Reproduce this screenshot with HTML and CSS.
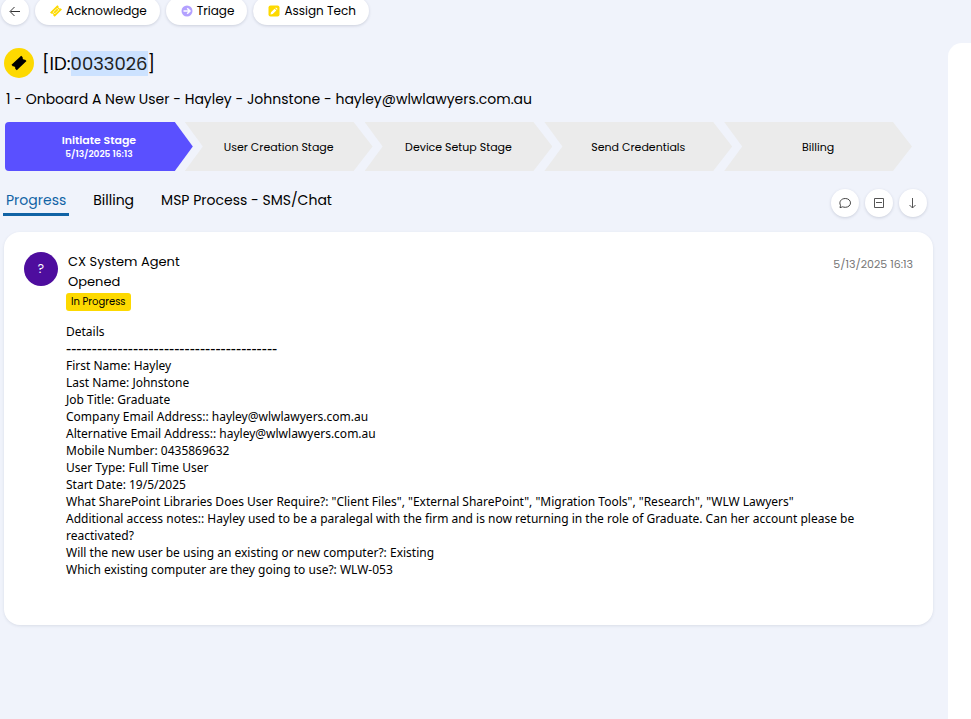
FILE: index.html
```html
<!DOCTYPE html>
<html lang="en">
<head>
    <meta charset="UTF-8">
    <meta name="viewport" content="width=device-width, initial-scale=1.0">
    <title>Ticket 0033026</title>
    <link rel="stylesheet" href="styles.css">
</head>
<body>
    <div class="toolbar">
        <button class="round-button" aria-label="Back">
            <svg width="12" height="12" viewBox="0 0 12 12" fill="none" stroke="#333"><path d="M11 6.500H1.5M5.5 2L1 6.500l4.5 4.5"/></svg>
        </button>
        <button class="action-button">
            <svg width="12" height="12" viewBox="0 0 12 12"><path fill="#fdd900" d="M0 7.5L7.3 0.2l1.3 1.1a1.4 1.4 0 0 0 1.9 1.9L12 4.5 4.7 11.8 3.3 10.6a1.4 1.4 0 0 0-1.9-1.9z"/><path fill="none" stroke="#fff" stroke-width=".7" d="M3 7.3l4-4 1.9 1.5-4 4z"/></svg>
            Acknowledge
        </button>
        <button class="action-button">
            <svg width="12" height="12" viewBox="0 0 12 12"><circle cx="6" cy="6" r="5.5" fill="#b3a1ff"/><path fill="none" stroke="#fff" stroke-width="1.5" d="M2.5 6h6.5M6.2 3.2L9 6 6.2 8.8"/></svg>
            Triage
        </button>
        <button class="action-button">
            <svg width="12" height="12" viewBox="0 0 12 12"><rect x=".5" y=".5" width="11" height="11" rx="2" fill="#fdd900"/><path fill="#fff" d="M2.5 9.5l.5-2.2 3.6-3.6 1.7 1.7L4.7 9zM7.2 3.1l.8-.7 1.7 1.7-.8.7z"/></svg>
            Assign Tech
        </button>
    </div>

    <div class="page">
        <main class="ticket">
            <div class="ticket-title">
                <span class="ticket-icon">
                    <svg width="16" height="16" viewBox="0 0 16 16"><path d="M0.5 9.8L10.2 0.7l1.5 1.6a1.7 1.7 0 0 0 2.2 2.2l1.6 1.6-9.7 9.2-1.6-1.6a1.7 1.7 0 0 0-2.2-2.2z"/></svg>
                </span>
                <h1>[ID:<mark>0033026</mark>]</h1>
            </div>
            <p class="subject">1 - Onboard A New User - Hayley - Johnstone - hayley@wlwlawyers.com.au</p>

            <div class="stages">
                <div class="stage active">
                    <span>Initiate Stage</span>
                    <small>5/13/2025 16:13</small>
                </div>
                <div class="stage">User Creation Stage</div>
                <div class="stage">Device Setup Stage</div>
                <div class="stage">Send Credentials</div>
                <div class="stage">Billing</div>
            </div>

            <div class="tab-row">
                <nav class="tabs">
                    <a href="#" class="tab selected">Progress</a>
                    <a href="#" class="tab">Billing</a>
                    <a href="#" class="tab">MSP Process - SMS/Chat</a>
                </nav>
                <div class="tab-actions">
                    <button class="round-button" aria-label="Conversation">
                        <svg width="12" height="12" viewBox="0 0 12 12" fill="none" stroke="#444"><path d="M1.5 8.3C-.3 5 2 1.5 6.3 1.5c3 0 5.2 1.9 5.2 4.4s-2.2 4.4-5.2 4.4c-1 0-1.9-.2-2.7-.5L1 10.7z"/></svg>
                    </button>
                    <button class="round-button" aria-label="Collapse">
                        <svg width="12" height="12" viewBox="0 0 12 12" fill="none" stroke="#555"><path d="M1.5 1.5h9v9h-9zM3 5.5h6"/></svg>
                    </button>
                    <button class="round-button" aria-label="Scroll down">
                        <svg width="12" height="12" viewBox="0 0 12 12" fill="none" stroke="#555"><path d="M5.5 1v10M2.5 8l3 3 3-3"/></svg>
                    </button>
                </div>
            </div>

            <article class="card">
                <div class="avatar">?</div>
                <div class="entry">
                    <div class="entry-head">
                        <div class="author">
                            <p>CX System Agent</p>
                            <p>Opened</p>
                        </div>
                        <time>5/13/2025 16:13</time>
                    </div>
                    <span class="badge">In Progress</span>
                    <div class="details">
                        <p>Details</p>
                        <p class="dashes">-----------------------------------------</p>
                        <p>First Name: Hayley</p>
                        <p>Last Name: Johnstone</p>
                        <p>Job Title: Graduate</p>
                        <p>Company Email Address:: hayley@wlwlawyers.com.au</p>
                        <p>Alternative Email Address:: hayley@wlwlawyers.com.au</p>
                        <p>Mobile Number: 0435869632</p>
                        <p>User Type: Full Time User</p>
                        <p>Start Date: 19/5/2025</p>
                        <p>What SharePoint Libraries Does User Require?: "Client Files", "External SharePoint", "Migration Tools", "Research", "WLW Lawyers"</p>
                        <p>Additional access notes:: Hayley used to be a paralegal with the firm and is now returning in the role of Graduate. Can her account please be reactivated?</p>
                        <p>Will the new user be using an existing or new computer?: Existing</p>
                        <p>Which existing computer are they going to use?: WLW-053</p>
                    </div>
                </div>
            </article>
        </main>
        <aside class="side-panel"></aside>
    </div>
</body>
</html>
```
FILE: styles.css
```css
* {
    margin: 0;
    padding: 0;
    box-sizing: border-box;
}
body {
    display: flex;
    flex-direction: column;
    min-height: 100vh;
    background-color: #f0f3fb;
    color: #000;
    font-family: Poppins, Inter, sans-serif;
    font-size: 14px;
    line-height: 20px;
}
button {
    border: none;
    cursor: pointer;
    background-color: #fff;
    color: #000;
    font-family: inherit;
    box-shadow: 0 1px 3px rgba(60, 70, 100, 0.2);
}

/* top buttons */
.toolbar {
    display: flex;
    gap: 6px;
    margin-top: -3px;
    padding-left: 1px;
    padding-bottom: 18px;
}
.action-button {
    display: flex;
    align-items: center;
    gap: 4px;
    height: 28px;
    padding: 0 13px 0 15px;
    border-radius: 14px;
    font-size: 12px;
}
.round-button {
    display: flex;
    align-items: center;
    justify-content: center;
    width: 28px;
    height: 28px;
    border-radius: 50%;
}

.page {
    display: flex;
    flex: 1;
    gap: 15px;
}
.ticket {
    flex: 1;
    padding: 5px 0 20px 4px;
}
.side-panel {
    width: 23px;
    background-color: #fff;
    border-radius: 14px 0 0 0;
}

/* ticket heading */
.ticket-title {
    display: flex;
    align-items: center;
    gap: 8px;
}
.ticket-icon {
    display: flex;
    align-items: center;
    justify-content: center;
    width: 30px;
    height: 30px;
    border-radius: 50%;
    background-color: #fdd900;
}
h1 {
    padding-top: 2px;
    font-size: 18px;
    font-weight: 400;
    line-height: 22px;
}
mark {
    background-color: #cce2ff;
    color: #222;
}
.subject {
    padding: 11px 2px 13px;
}

/* stage arrows */
.stages {
    display: flex;
    padding: 0 21px 0 1px;
}
.stage {
    display: flex;
    flex: 1;
    flex-direction: column;
    align-items: center;
    justify-content: center;
    height: 49px;
    background-color: #ebebeb;
    font-size: 11px;
    line-height: 14px;
    clip-path: polygon(0 0, calc(100% - 19px) 0, 100% 50%, calc(100% - 19px) 100%, 0 100%, 18px 50%);
}
.stage + .stage {
    margin-left: -8px;
}
.stage.active {
    background-color: #5a50ff;
    color: #fff;
    font-weight: 600;
    border-radius: 4px 0 0 4px;
    clip-path: polygon(0 0, calc(100% - 18px) 0, 100% 50%, calc(100% - 18px) 100%, 0 100%);
}
.stage small {
    font-size: 9px;
}

/* tabs */
.tab-row {
    display: flex;
    justify-content: space-between;
    padding: 18px 6px 15px 0;
}
.tabs {
    display: flex;
    align-items: flex-start;
    gap: 21px;
    margin-left: -1px;
}
.tab {
    padding: 1px 3px 3px;
    border-bottom: 3px solid transparent;
    color: #000;
    text-decoration: none;
}
.tab.selected {
    border-color: #1163a5;
    color: #1163a5;
}
.tab-actions {
    display: flex;
    gap: 6px;
}

/* progress entry */
.card {
    display: flex;
    gap: 8px;
    padding: 20px 20px 47px;
    border-radius: 16px;
    background-color: #fff;
    box-shadow: 0 1px 3px rgba(60, 70, 100, 0.12);
}
.avatar {
    flex-shrink: 0;
    width: 34px;
    height: 34px;
    border-radius: 50%;
    background-color: #4e0d9e;
    color: #fff;
    font-size: 12px;
    line-height: 34px;
    text-align: center;
}
.entry {
    flex: 1;
}
.entry-head {
    display: flex;
    justify-content: space-between;
    font-size: 13px;
}
.author {
    padding-left: 2px;
}
time {
    padding-top: 2px;
    color: #777;
    font-size: 11px;
}
.badge {
    display: block;
    width: fit-content;
    margin: 1px 0 12px;
    padding: 0 5px;
    border-radius: 3px;
    background-color: #fdd900;
    font-size: 10px;
    line-height: 18px;
}
.details {
    font-family: "Segoe UI", "Noto Sans", sans-serif;
    font-size: 12px;
    line-height: 17px;
}
.dashes {
    font-size: 16px;
}
```
